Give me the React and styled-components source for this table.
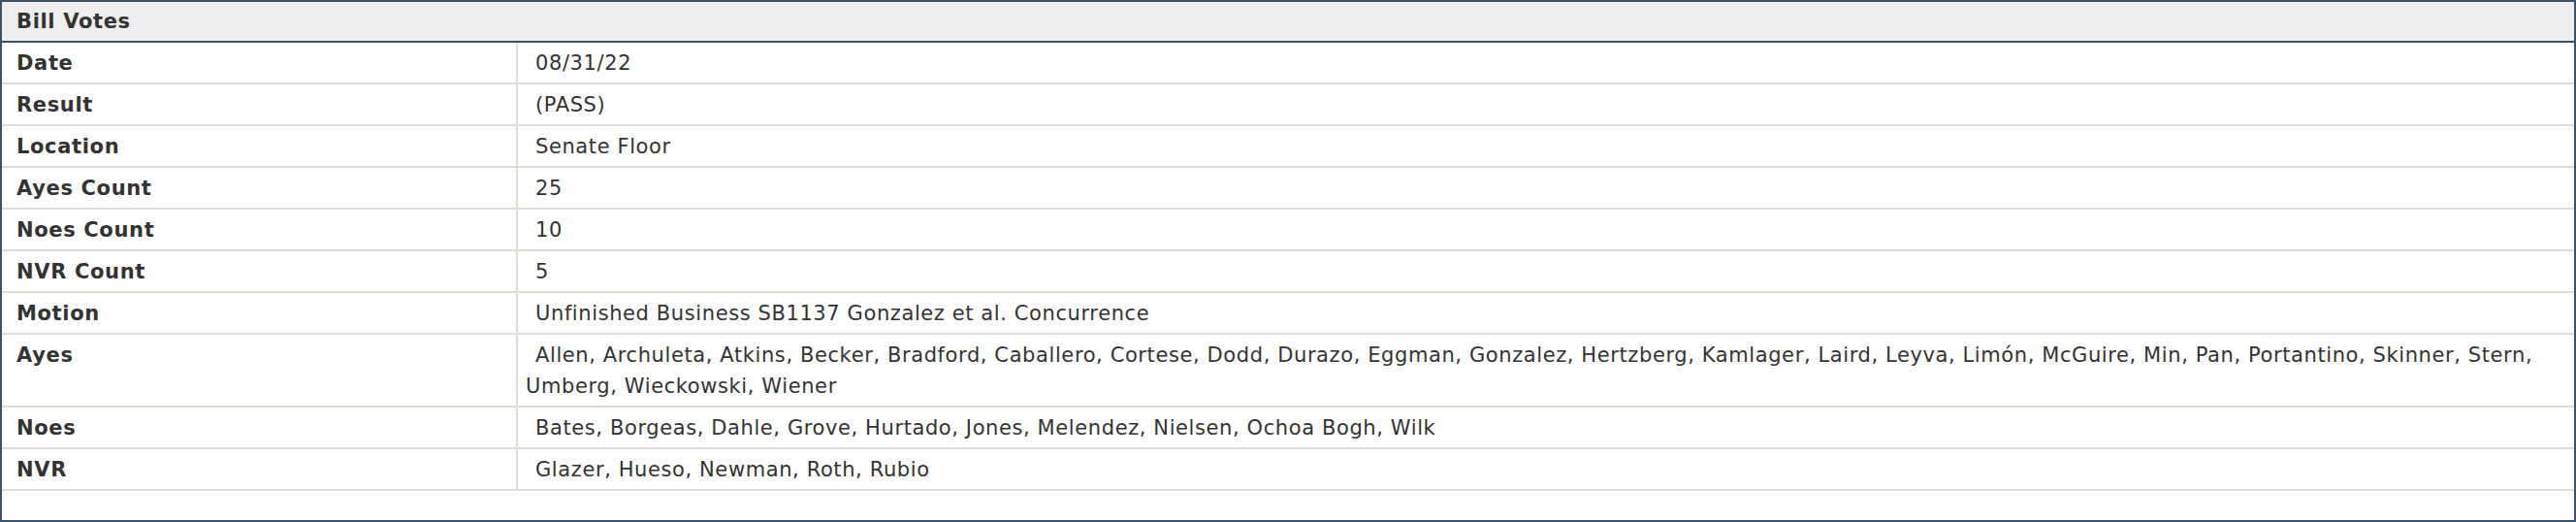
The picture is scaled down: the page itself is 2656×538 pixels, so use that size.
import React from 'react';
import styled, { createGlobalStyle } from 'styled-components';

const GlobalStyle = createGlobalStyle`
  html, body {
    margin: 0;
    padding: 0;
    background: #ffffff;
  }
  body {
    font-family: "DejaVu Sans", Verdana, sans-serif;
    color: #333333;
  }
`;

const Panel = styled.section`
  box-sizing: border-box;
  width: 2656px;
  height: 538px;
  border: 2px solid #3b5268;
  background: #ffffff;
`;

const PanelHeader = styled.h2`
  margin: 0;
  height: 40px;
  padding: 0 15px;
  display: flex;
  align-items: center;
  background: #eeeeee;
  border-bottom: 2px solid #3b5268;
  font-size: 21px;
  letter-spacing: 0.65px;
  font-weight: bold;
  color: #333333;
`;

const VoteTable = styled.div`
  display: grid;
  grid-template-columns: 532px 1fr;
`;

const Label = styled.div`
  padding: 4.5px 15px;
  line-height: 32px;
  font-size: 21px;
  letter-spacing: 0.65px;
  font-weight: bold;
  border-bottom: 2px solid #deded9;
  border-right: 2px solid #deded9;
`;

const Value = styled.div`
  padding: 4.5px 8px;
  line-height: 32px;
  font-size: 21px;
  letter-spacing: 0.6px;
  text-indent: ${({ $indent }) => $indent}px;
  border-bottom: 2px solid #deded9;
`;

const rows = [
  ['Date', '08/31/22'],
  ['Result', '(PASS)'],
  ['Location', 'Senate Floor'],
  ['Ayes Count', '25'],
  ['Noes Count', '10'],
  ['NVR Count', '5'],
  ['Motion', 'Unfinished Business SB1137 Gonzalez et al. Concurrence'],
  ['Ayes', 'Allen, Archuleta, Atkins, Becker, Bradford, Caballero, Cortese, Dodd, Durazo, Eggman, Gonzalez, Hertzberg, Kamlager, Laird, Leyva, Limón, McGuire, Min, Pan, Portantino, Skinner, Stern, Umberg, Wieckowski, Wiener'],
  ['Noes', 'Bates, Borgeas, Dahle, Grove, Hurtado, Jones, Melendez, Nielsen, Ochoa Bogh, Wilk'],
  ['NVR', 'Glazer, Hueso, Newman, Roth, Rubio'],
];

const App = () => (
  <>
    <GlobalStyle />
    <Panel>
      <PanelHeader>Bill Votes</PanelHeader>
      <VoteTable>
        {rows.map(([label, value]) => (
          <React.Fragment key={label}>
            <Label>{label}</Label>
            <Value $indent={10}>{value}</Value>
          </React.Fragment>
        ))}
      </VoteTable>
    </Panel>
  </>
);

export default App;
